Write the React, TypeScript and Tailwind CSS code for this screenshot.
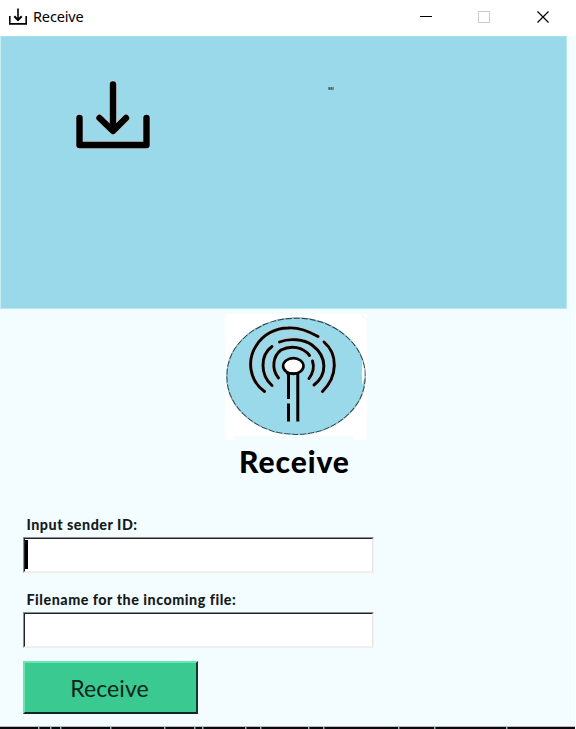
const TRAY = "M79.5 118V145H146.5V118";

function TitleBar() {
  return (
    <header className="flex h-9 w-full items-center bg-white">
      <svg className="-mt-[2px] ml-[8px] h-[18px] w-[20px]" viewBox="0 0 20 18" fill="none" stroke="#000" strokeWidth="1.6">
        <path d="M1.8 8V15.9H18.2V8M10 0.5V12" />
        <path d="M6.3 8.3L10 12L13.7 8.3" strokeWidth="2" />
      </svg>
      <h1 className="-mt-[5px] ml-[5px] font-['Noto_Sans',sans-serif] text-[14.5px] leading-5 tracking-[-0.15px] text-black">Receive</h1>
      <svg className="-mt-[2px] ml-auto mr-[25px] h-3 w-[130px]" viewBox="0 0 130 12" fill="none" shapeRendering="crispEdges">
        <path d="M0 5.5H12" stroke="#000" />
        <rect x="58.5" y="0.5" width="11" height="11" stroke="#ccc" />
        <path d="M117.5 0.5L128.5 11.5M128.5 0.5L117.5 11.5" stroke="#000" strokeWidth="1.2" shapeRendering="auto" />
      </svg>
    </header>
  );
}

function Banner() {
  return (
    <div className="h-[273px] w-[567px] border border-t-[#a5dfec] border-r-[#b7e8f1] border-b-[#b7e8f1] border-l-[#c7edf4] bg-[#9ad9ea]">
      <svg className="h-[271px] w-[565px]" viewBox="1 37 565 271" fill="none" strokeLinecap="round" strokeLinejoin="round">
        <g stroke="#d5cccb" strokeWidth="7.6">
          <path d={TRAY} />
          <path d="M113 84.5V130M99.5 118L113 131L126 118" />
        </g>
        <g stroke="#000" strokeWidth="6.4">
          <path d={TRAY} />
          <path d="M113 84.5V130M99.5 118L113 131L126 118" />
        </g>
        <path d="M328 88.5H334" stroke="#788b93" strokeWidth="3" strokeLinecap="butt" />
        <path d="M329 88.5H333" stroke="#46545b" strokeWidth="2" strokeDasharray="1 1" strokeLinecap="butt" />
      </svg>
    </div>
  );
}

function Antenna() {
  return (
    <svg className="ml-[225px] mt-[5px] h-[126px] w-[142px]" viewBox="225 314 142 126" fill="none">
      <path d="M226 314H367V440H353V436H235V440H225V322Z" fill="#fff" />
      <path d="M361 314L367 320" stroke="#e4f7fa" />
      <ellipse cx="296" cy="376.3" rx="69.2" ry="58.2" fill="#9ad9ea" stroke="#244951" strokeWidth="1.1" />
      <ellipse cx="296" cy="376.3" rx="69.2" ry="58.2" stroke="#9fc9d2" strokeWidth="1.4" strokeDasharray="2 6" />
      <path d="M362 360V385L364.5 378V370Z" fill="#fff" />
      <g strokeLinecap="round">
        {[
          { stroke: "#c9c6c8", strokeWidth: 4.5 },
          { stroke: "#050505", strokeWidth: 2.9 },
        ].map((s) => (
          <g key={s.stroke} {...s}>
            <path d="M264.5 391.5C249 380 247 360 256 346C263 334 276 328 288 328C300 327 310 332 318 336.5" />
            <path d="M324 342C338 354 338 376 322.5 391.5" />
            <path d="M272 385.5C260 375 260 355 272 346.5" />
            <path d="M279.5 342C289 338 304 339 312 345C328 357 327 375 314 385" />
            <path d="M278.5 378C271 369 273 356 281 350C291 345 303 347 309.5 355.5" />
            <path d="M312.5 361C314.5 367 313 373 309 378.5" />
          </g>
        ))}
      </g>
      <path d="M288.5 373H298V421H288.5Z" fill="#a5dce9" />
      <path d="M288.5 373V399M288.5 403.5V421.5M297.8 373V421.5" stroke="#000" strokeWidth="3" />
      <ellipse cx="293.3" cy="366" rx="10.2" ry="7.9" fill="#fff" stroke="#000" strokeWidth="2.6" />
      <path d="M286 373.3H299" stroke="#000" strokeWidth="2" />
    </svg>
  );
}

function Field({ label, autoFocus = false }: { label: string; autoFocus?: boolean }) {
  return (
    <label className="block h-[75px] w-[351px]">
      <span className="ml-[3.5px] block h-[24px] whitespace-nowrap font-['Lato',sans-serif] text-[14.3px] font-black leading-[24px] tracking-[0.52px] text-[#151b1d]">
        {label}
      </span>
      <span className="block h-[36px] border border-t-[#8c8f90] border-r-[#f3f2f3] border-b-[#efeeee] border-l-[#8c8f90]">
        <span className="flex h-[34px] border border-t-[#242027] border-r-[#e9e1e3] border-b-[#f3f0f0] border-l-[#242027] bg-white pt-[1px]">
          {autoFocus && <span className="block h-[29px] w-[3px] bg-black" />}
        </span>
      </span>
    </label>
  );
}

const MARKS = [38, 50, 60, 110, 164, 194, 202, 245, 260, 308, 323, 398, 434, 506];

export default function App() {
  return (
    <main className="flex h-[729px] w-[576px] flex-col overflow-hidden border-r border-white bg-[#f3fdff]">
      <TitleBar />
      <Banner />
      <Antenna />
      <h2 className="ml-[239px] mt-[3px] h-[36px] whitespace-nowrap font-['Lato',sans-serif] text-[30px] font-black leading-9 tracking-[0.95px] text-black">Receive</h2>
      <form className="ml-[23px] mt-[34px] flex flex-col">
        <Field label="Input sender ID:" autoFocus />
        <Field label="Filename for the incoming file:" />
        <button type="button" className="-mt-[2px] h-[53px] w-[175px] border-2 border-t-[#65e7ad] border-r-[#143829] border-b-[#12261f] border-l-[#65e7ad] bg-[#39c991] pr-[2px] font-['Lato',sans-serif] text-[23px] leading-8 tracking-[0.1px] text-[#10251c]">
          Receive
        </button>
      </form>
      <footer className="mt-auto h-[3px] border-t border-[#b8bebf] bg-[#0b080c]">
        <svg className="block h-[2px] w-[575px]" viewBox="0 0 575 2">
          {MARKS.map((x) => (
            <path key={x} d={`M${x} 0h1.5v2h-1.5z`} fill="#9babb5" />
          ))}
        </svg>
      </footer>
    </main>
  );
}
